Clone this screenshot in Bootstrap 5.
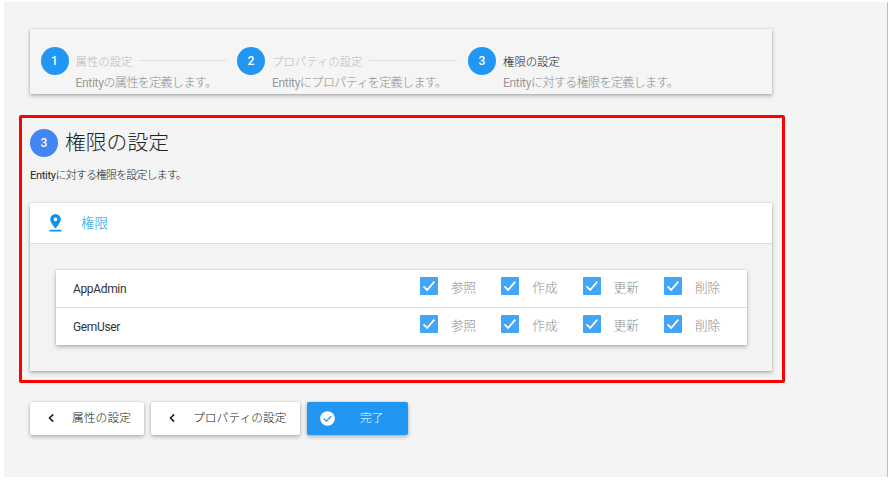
<!DOCTYPE html>
<html lang="ja">
<head>
<meta charset="utf-8">
<meta name="viewport" content="width=device-width, initial-scale=1">
<title>権限の設定</title>
<link href="https://cdn.jsdelivr.net/npm/bootstrap@5.3.0/dist/css/bootstrap.min.css" rel="stylesheet">
<style>
body{font-family:Roboto,"Noto Sans CJK JP",sans-serif;font-size:12px;line-height:16px;color:#333;background:#fff;overflow:hidden}
.page{width:884px;height:475px;margin:2px 0 0 4px;padding:27px 0 0 15px;background:#f4f4f4;border-right:1px solid #c0c0c0}
.raised{box-shadow:0 2px 4px rgba(0,0,0,.26),0 0 2px rgba(0,0,0,.16)}
.stepper{width:742px;height:65px;margin-left:11px;padding:18px 0 0 10.5px;background:#f5f5f5}
.num{width:28px;height:28px;border-radius:50%;background:#2196f3;color:#fff;font-size:12px;font-weight:500;flex:none}
.step1{width:196.5px}.step2{width:231px}.step3{width:230px}
.step-text{margin-left:7px;padding-top:7px;white-space:nowrap}
.step-title{font-size:11.4px;color:#b8b8b8;font-weight:300}
.step-title.current{color:#111}
.rule{height:1px;background:#dedede;width:88px;margin:-3px 0 0 7px}
.step-desc{font-size:12px;color:#8c8c8c;font-weight:300;margin-top:5px;letter-spacing:-.6px}
.step-desc .en,.desc .en{font-weight:400;letter-spacing:-.3px}
.step-desc .en{color:#999}
.marked{width:766px;height:268px;margin-top:21px;border:3px solid #f00;border-radius:2px;padding:11px 10px 0 8px}
.marked .num{background:#4285f4}
.heading{font-size:20.8px;line-height:28px;font-weight:300;margin-left:7px;color:#222}
.desc{font-size:11px;margin-top:11px;font-weight:300;color:#222;letter-spacing:-.9px}
.panel{height:168px;margin-top:19px;background:#f3f3f3;width:742px}
.panel-head{height:41px;background:#fff;border-bottom:1px solid #ddd;padding-left:18px;color:#1e9be9;font-size:13.5px;font-weight:300}
.panel-head svg{margin:-2px 18px 0 0}
.roles{width:691px;margin:26px 0 0 25.5px;background:#fff;border-radius:1px}
.role{height:37px;padding-left:17.5px}
.role + .role{height:38px;border-top:1px solid #e0e0e0}
.role-name{width:347px;padding-top:1px;font-size:12px;color:#333;letter-spacing:-.35px}
.perm{width:81.3px;color:#8c8c8c;font-size:12.6px;font-weight:300;margin-top:-2px}
.box{width:18px;height:18px;border-radius:1px;background:#42a5f5;margin:-4px 13px 0 0}
.actions{gap:7px;margin:19px 0 0 11px}
.act{--bs-btn-border-width:0;height:33px;border-radius:2px;padding:0 0 1px 15px;background:#fff;color:#222;font-size:11.8px;line-height:16px;font-weight:300}
.act-a{width:114px}.act-b{width:149px}.act-c{width:101.5px;margin-left:-.5px;padding-left:13.5px;background:#2196f3;color:#fff}
.act svg{flex:none;margin-right:15px}
.act-c svg{margin-right:25px}
</style>
<script src="https://cdn.jsdelivr.net/npm/bootstrap@5.3.0/dist/js/bootstrap.bundle.min.js" defer></script>
</head>
<body>
<svg class="d-none">
<symbol id="check" viewBox="0 0 18 18"><path d="M3.5 9.3 7.2 13 14.3 4.7" fill="none" stroke="#fff" stroke-width="1.8"/></symbol>
</svg>
<main class="page">
<div class="stepper raised d-flex">
<div class="step1 d-flex"><span class="num d-flex align-items-center justify-content-center">1</span><div class="step-text"><div class="step-title d-flex align-items-center">属性の設定<span class="rule"></span></div><div class="step-desc"><span class="en">Entity</span>の属性を定義します。</div></div></div>
<div class="step2 d-flex"><span class="num d-flex align-items-center justify-content-center">2</span><div class="step-text"><div class="step-title d-flex align-items-center">プロパティの設定<span class="rule"></span></div><div class="step-desc"><span class="en">Entity</span>にプロパティを定義します。</div></div></div>
<div class="step3 d-flex"><span class="num d-flex align-items-center justify-content-center">3</span><div class="step-text"><div class="step-title current">権限の設定</div><div class="step-desc"><span class="en">Entity</span>に対する権限を定義します。</div></div></div>
</div>
<section class="marked">
<div class="d-flex"><span class="num d-flex align-items-center justify-content-center">3</span><h1 class="heading mb-0">権限の設定</h1></div>
<div class="desc"><span class="en">Entity</span>に対する権限を設定します。</div>
<div class="panel raised">
<div class="panel-head d-flex align-items-center"><svg width="15" height="19" viewBox="0 0 15 19"><path fill="#0c96e8" fill-rule="evenodd" d="M7.5 1a5.3 5.3 0 0 0-5.3 5.3C2.2 10.1 7.5 15.6 7.5 15.6s5.3-5.5 5.3-9.3A5.3 5.3 0 0 0 7.5 1zm0 3.6a1.8 1.8 0 1 1 0 3.6 1.8 1.8 0 0 1 0-3.6zM1.5 16.8h12v1.6h-12z"/></svg>権限</div>
<div class="roles raised">
<div class="role d-flex align-items-center"><span class="role-name">AppAdmin</span>
<span class="perm d-flex align-items-center"><svg class="box"><use href="#check"/></svg>参照</span><span class="perm d-flex align-items-center"><svg class="box"><use href="#check"/></svg>作成</span><span class="perm d-flex align-items-center"><svg class="box"><use href="#check"/></svg>更新</span><span class="perm d-flex align-items-center"><svg class="box"><use href="#check"/></svg>削除</span></div>
<div class="role d-flex align-items-center"><span class="role-name">GemUser</span>
<span class="perm d-flex align-items-center"><svg class="box"><use href="#check"/></svg>参照</span><span class="perm d-flex align-items-center"><svg class="box"><use href="#check"/></svg>作成</span><span class="perm d-flex align-items-center"><svg class="box"><use href="#check"/></svg>更新</span><span class="perm d-flex align-items-center"><svg class="box"><use href="#check"/></svg>削除</span></div>
</div>
</div>
</section>
<div class="actions d-flex">
<button class="btn act act-a raised d-flex align-items-center"><svg width="12" height="12" viewBox="0 0 12 12"><path d="M8.2 2.4 4.5 6l3.7 3.6" fill="none" stroke="#222" stroke-width="1.6"/></svg>属性の設定</button>
<button class="btn act act-b raised d-flex align-items-center"><svg width="12" height="12" viewBox="0 0 12 12"><path d="M8.2 2.4 4.5 6l3.7 3.6" fill="none" stroke="#222" stroke-width="1.6"/></svg>プロパティの設定</button>
<button class="btn act act-c raised d-flex align-items-center"><svg width="15" height="15" viewBox="0 0 15 15"><circle cx="7.5" cy="7.5" r="7.3" fill="#fff"/><path d="m3.7 7.6 2.6 2.6 5-5" fill="none" stroke="#2196f3" stroke-width="1.3"/></svg>完了</button>
</div>
</main>
</body>
</html>
